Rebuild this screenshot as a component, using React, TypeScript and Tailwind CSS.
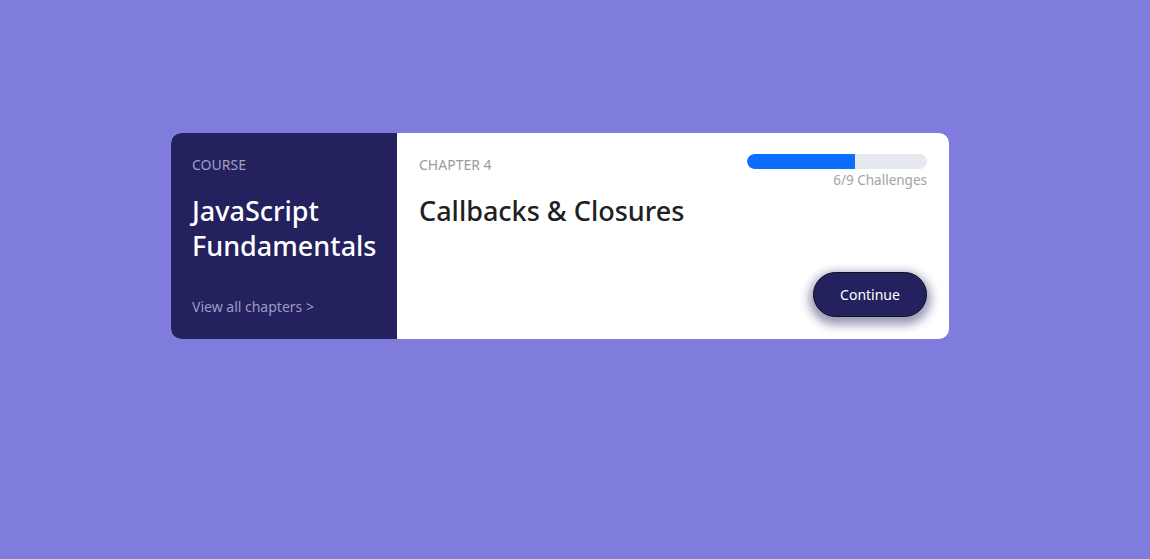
import React from 'react';

const App: React.FC = () => {
    const done = 6;
    const total = 9;

    return (
        <div
            className="min-h-[559px] w-full bg-[#807cdd] pt-[133px] pl-[171px]"
            style={{ fontFamily: '"Noto Sans", "Open Sans", sans-serif' }}
        >
            <div className="flex w-[778px] h-[206px] rounded-[10px] overflow-hidden bg-white">
                <div className="flex flex-col w-[226px] bg-[#24215f] px-[21px] pt-[24px] pb-[24px]">
                    <span className="text-[14px] leading-[16px] uppercase text-[#a09fc4]">Course</span>
                    <h1 className="mt-[20px] text-[27px] leading-[35px] font-medium text-white">
                        JavaScript Fundamentals
                    </h1>
                    <a className="mt-auto text-[14px] leading-[16px] text-[#9d9bc4] cursor-pointer">View all chapters &gt;</a>
                </div>

                <div className="flex-1 flex flex-col px-[22px] pt-[21px] pb-[22px]">
                    <div className="flex justify-between items-start">
                        <div className="flex flex-col">
                            <span className="mt-[3px] text-[14px] leading-[16px] uppercase text-[#9a9a9a]">Chapter 4</span>
                            <h2 className="mt-[20px] text-[27px] leading-[35px] font-medium text-[#202020]">
                                Callbacks &amp; Closures
                            </h2>
                        </div>
                        <div className="flex flex-col items-end w-[180px]">
                            <div className="w-full h-[15px] rounded-full bg-[#e6e9ed] overflow-hidden">
                                <div className="h-full bg-[#0d6efd] rounded-l-full" style={{ width: '60%' }} />
                            </div>
                            <span className="mt-[3px] text-[13.5px] leading-[17px] text-[#a3a3a3]">
                                {done}/{total} Challenges
                            </span>
                        </div>
                    </div>
                    <div className="mt-auto flex justify-end">
                        <button className="w-[114px] h-[45px] rounded-full bg-[#24215f] border border-[#111] text-white text-[14px] shadow-[0_4px_10px_4px_rgba(36,33,95,0.45)]">
                            Continue
                        </button>
                    </div>
                </div>
            </div>
        </div>
    );
};

export default App;
